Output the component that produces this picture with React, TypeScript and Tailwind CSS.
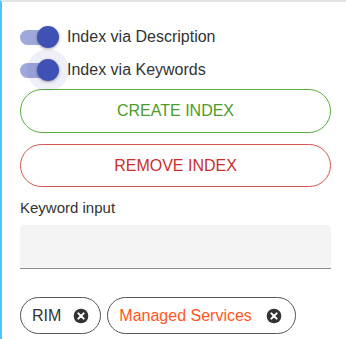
import React from "react";

const font = { fontFamily: '"Liberation Sans", Arial, sans-serif' };

function Toggle({ halo }: { halo?: boolean }) {
  return (
    <div className="relative w-[40px] h-[20px] shrink-0">
      <div className="absolute left-0 top-[3px] w-[35px] h-[15px] rounded-full bg-[#3f51b5]/50" />
      {halo && (
        <div className="absolute left-[7px] top-[-11px] w-[42px] h-[42px] rounded-full bg-[#3f51b5]/[0.09]" />
      )}
      <div className="absolute left-[17px] top-[-1px] w-[22px] h-[22px] rounded-full bg-[#3f51b5] shadow-[0_1px_3px_rgba(0,0,0,0.35)]" />
    </div>
  );
}

function CancelIcon() {
  return (
    <svg width="16" height="16" viewBox="0 0 24 24" className="shrink-0">
      <circle cx="12" cy="12" r="11" fill="#333" />
      <path d="M8 8 L16 16 M16 8 L8 16" stroke="#fff" strokeWidth="3" strokeLinecap="round" />
    </svg>
  );
}

export default function App() {
  return (
    <div
      style={font}
      className="w-[346px] h-[339px] bg-white border-l-2 border-l-[#4fc3f7] border-t-2 border-t-[#e4e4e4] pl-[18px] pr-[15px] pt-[18px] overflow-hidden text-[#333]"
    >
      <div className="flex items-center h-[33px]">
        <Toggle />
        <span className="ml-[7px] text-[16px] relative">Index via Description</span>
      </div>
      <div className="flex items-center h-[33px]">
        <Toggle halo />
        <span className="ml-[7px] text-[16px] relative">Index via Keywords</span>
      </div>
      <div className="mt-[3px] h-[44px] rounded-full border-[1.5px] border-[#5cae3c] flex items-center justify-center text-[16px] text-[#4c9c2a]">
        CREATE INDEX
      </div>
      <div className="mt-[11px] h-[43px] rounded-full border-[1.5px] border-[#d9534f] flex items-center justify-center text-[16px] text-[#c9302c]">
        REMOVE INDEX
      </div>
      <div className="mt-[12px] text-[15px] leading-[18px]">Keyword input</div>
      <div className="mt-[8px] h-[44px] bg-[#f4f4f4] rounded-t-[4px] border-b border-b-[#8c8c8c]" />
      <div className="mt-[28px] flex gap-[6px]">
        <div className="h-[37px] rounded-full border border-[#555] flex items-center pl-[11px] pr-[11px] gap-[12px] text-[16px] text-[#333]">
          <span>RIM</span>
          <CancelIcon />
        </div>
        <div className="h-[37px] rounded-full border border-[#555] flex items-center pl-[11px] pr-[13px] gap-[14px] text-[16px] text-[#ff5722]">
          <span>Managed Services</span>
          <CancelIcon />
        </div>
      </div>
    </div>
  );
}
